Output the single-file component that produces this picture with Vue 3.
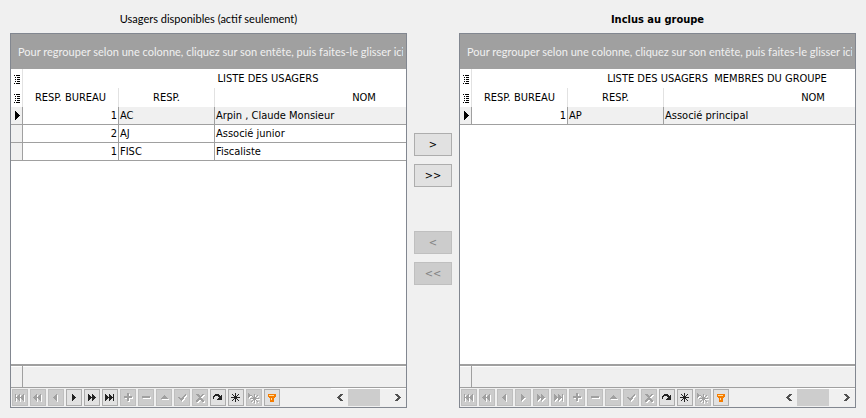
<script setup>
const transfers = [
  { label: '>', title: 'Ajouter', off: false },
  { label: '>>', title: 'Tout ajouter', off: false },
  { label: '<', title: 'Retirer', off: true },
  { label: '<<', title: 'Tout retirer', off: true },
]

const tools = [
  { name: 'Premier', d: 'M3 5h1v7H3zM8 5v7L4 8.5zM12 5v7L8 8.5z' },
  { name: 'Page précédente', d: 'M7 5v7L3 8.5zM11 5v7L7 8.5z' },
  { name: 'Précédent', d: 'M9 5v7L5 8.5z' },
  { name: 'Suivant', d: 'M6 5v7l4-3.5z' },
  { name: 'Page suivante', d: 'M4 5v7l4-3.5zM8 5v7l4-3.5z' },
  { name: 'Dernier', d: 'M3 5v7l4-3.5zM7 5v7l4-3.5zM11 5h1v7h-1z' },
  { name: 'Insérer', d: 'M7 4h2v3h3v2H9v3H7V9H4V7h3z' },
  { name: 'Supprimer', d: 'M4 7h8v2H4z' },
  { name: 'Modifier', d: 'M8 6l4 4H4z' },
  { name: 'Enregistrer', d: 'M4 8h2l1 2 4-5h1v1l-4 6H7z' },
  { name: 'Annuler', d: 'M4 5h2l2 2 2-2h2v1L9 8.500l3 3v1h-2l-2-2-2 2H4v-1l3-3-3-2.500z' },
  { name: 'Rafraîchir', d: 'M3 10V7h1V6h1V5h4v1h1v1h1V6h1v5H7v-1h1V9h1V8H8V7H5v1H4v2z' },
  { name: 'Signet', d: 'M7 4h1v3h1V6h1V5h1v1h-1v1H9v1h3v1H9v1h1v1h1v1h-1v-1H9v-1H8v3H7v-3H6v1H5v1H4v-1h1v-1h1V9H3V8h3V7H5V6H4V5h1v1h1v1h1z' },
  { name: 'Aller au signet', d: 'M2 4v5l3-2.500zM8 5h1v3h1V7h1V6h1v1h-1v1h-1v1h3v1h-3v1h1v1h1v1h-1v-1h-1v-1H9v3H8v-3H7v1H6v1H5v-1h1v-1h1v-1H4V9h3V8H6V7H5V6h1v1h1v1h1z' },
  { name: 'Filtrer', filter: true },
]

const panels = [
  {
    id: 'disponibles',
    title: 'Usagers disponibles (actif seulement)',
    bold: false,
    band: 'LISTE DES USAGERS',
    rows: [
      [1, 'AC', 'Arpin , Claude Monsieur'],
      [2, 'AJ', 'Associé junior'],
      [1, 'FISC', 'Fiscaliste'],
    ],
    enabled: [3, 4, 5, 11, 12, 14],
  },
  {
    id: 'inclus',
    title: 'Inclus au groupe',
    bold: true,
    band: 'LISTE DES USAGERS\u00a0 MEMBRES DU GROUPE',
    rows: [[1, 'AP', 'Associé principal']],
    enabled: [11, 12, 14],
  },
]
</script>

<template>
  <main class="page">
    <section v-for="p in panels" :key="p.id" class="side" :class="p.id" :aria-labelledby="p.id">
      <h2 :id="p.id" class="title" :class="{ bold: p.bold }">{{ p.title }}</h2>
      <div class="panel">
        <div class="groupbar">
          <span>Pour regrouper selon une colonne, cliquez sur son entête, puis faites-le glisser ici</span>
        </div>
        <div class="view">
          <table>
            <colgroup>
              <col class="c-mark"><col class="c-code"><col class="c-code"><col class="c-name">
            </colgroup>
            <thead>
              <tr>
                <th class="sep">
                  <svg class="list" width="6" height="9" viewBox="0 0 6 9"><path d="M0 0h1v1H0zM2 0h4v1H2zM1 2h1v1H1zM3 2h3v1H3zM1 4h1v1H1zM3 4h3v1H3zM1 6h1v1H1zM3 6h3v1H3zM0 8h1v1H0zM2 8h4v1H2z" /></svg>
                </th>
                <th colspan="3">{{ p.band }}</th>
              </tr>
              <tr>
                <th class="sep">
                  <svg class="list" width="6" height="9" viewBox="0 0 6 9"><path d="M0 0h1v1H0zM2 0h4v1H2zM1 2h1v1H1zM3 2h3v1H3zM1 4h1v1H1zM3 4h3v1H3zM1 6h1v1H1zM3 6h3v1H3zM0 8h1v1H0zM2 8h4v1H2z" /></svg>
                </th>
                <th class="sep">RESP. BUREAU</th>
                <th class="sep">RESP.</th>
                <th>NOM</th>
              </tr>
            </thead>
            <tbody>
              <tr v-for="(r, i) in p.rows" :key="i" :class="{ current: i === 0 }">
                <td class="mark">
                  <svg v-if="i === 0" width="5" height="9" viewBox="0 0 5 9"><path d="M0 0v9l5-4.500z" /></svg>
                </td>
                <td class="num">{{ r[0] }}</td>
                <td>{{ r[1] }}</td>
                <td>{{ r[2] }}</td>
              </tr>
            </tbody>
          </table>
        </div>
        <div class="summary"><span class="stub"></span></div>
        <div class="navigator">
          <div class="tools">
            <button
              v-for="(t, i) in tools" :key="t.name" type="button" class="tool"
              :disabled="!p.enabled.includes(i)" :aria-label="t.name"
            >
              <svg width="16" height="17" viewBox="0 0 16 17">
                <template v-if="t.filter">
                  <path d="M4 5h8v3h-1v1h-1v4H6V9H5V8H4z" fill="#f57c00" />
                  <path d="M5 6h5v1H5zM7 9h1v2H7z" fill="#ffe0a0" />
                </template>
                <path v-else :d="t.d" />
              </svg>
            </button>
          </div>
          <div class="scroll">
            <button type="button" class="arrow" aria-label="Défiler à gauche">
              <svg width="6" height="7" viewBox="0 0 6 7"><path d="M3 0h3v1H5v1H4v1H3v1h1v1h1v1h1v1H3V6H2V5H1V4H0V3h1V2h1V1h1z" /></svg>
            </button>
            <div class="track"><div class="thumb"></div></div>
            <button type="button" class="arrow" aria-label="Défiler à droite">
              <svg width="6" height="7" viewBox="0 0 6 7"><path d="M3 0H0v1h1v1h1v1h1v1H2v1H1v1H0v1h3V6h1V5h1V4h1V3H5V2H4V1H3z" /></svg>
            </button>
          </div>
        </div>
      </div>
    </section>

    <div class="transfer">
      <button v-for="b in transfers" :key="b.label" type="button" :disabled="b.off" :aria-label="b.title">{{ b.label }}</button>
    </div>
  </main>
</template>

<style>
body {
  margin: 0;
  background: #f0f0f0;
}
</style>

<style scoped>
.page {
  box-sizing: border-box;
  min-height: 100vh;
  padding: 10px;
  display: grid;
  grid-template-columns: minmax(0, 1fr) 52px minmax(0, 1fr);
  font: 11px/18px Tahoma, Lato, sans-serif;
  color: #000;
}
.side {
  grid-row: 1;
  display: flex;
  flex-direction: column;
}
.disponibles { grid-column: 1; }
.inclus { grid-column: 3; }
.title {
  margin: 0;
  padding: 0 0 5px;
  font-size: 11px;
  font-weight: 400;
  text-align: center;
}
.title.bold {
  padding: 1px 0 4px;
  font-family: Tahoma, "DejaVu Sans Condensed", sans-serif;
  font-weight: 700;
}
.panel {
  flex: 1;
  display: flex;
  flex-direction: column;
  border: 1px solid #828790;
  background: #fff;
}
.groupbar {
  padding: 9px 3px 8px 7px;
  background: #a0a0a0;
  color: #f0f0f0;
}
.groupbar span {
  display: block;
  overflow: hidden;
  white-space: nowrap;
}
.view {
  flex: 1;
  overflow: hidden;
}
table {
  width: 502px;
  table-layout: fixed;
  border-collapse: separate;
  border-spacing: 0;
  font-family: Tahoma, "DejaVu Sans Condensed", sans-serif;
}
.c-mark { width: 12px; }
.c-code { width: 96px; }
th {
  box-sizing: border-box;
  height: 19px;
  padding: 1px 0 0;
  font-weight: 400;
  white-space: nowrap;
}
th.sep { border-right: 1px solid #e2e2e2; }
svg {
  display: block;
  fill: currentColor;
  shape-rendering: crispEdges;
}
.list { margin-left: 3px; }
td {
  box-sizing: border-box;
  height: 18px;
  padding: 1px 1px 0;
  line-height: 16px;
  border-right: 1px solid #a0a0a0;
  border-bottom: 1px solid #a0a0a0;
  white-space: nowrap;
}
.current td { background: #f0f0f0; }
.current td.num { background: #fff; }
td.num { text-align: right; }
td.mark {
  padding: 0 0 0 4px;
  background: #f0f0f0;
}
.summary {
  display: flex;
  height: 21px;
  border-top: 2px solid #a0a0a0;
  border-bottom: 1px solid #a0a0a0;
  background: #f0f0f0;
  box-shadow: inset 0 1px #fff;
}
.stub {
  width: 11px;
  border-right: 1px solid #a0a0a0;
}
.navigator {
  display: flex;
  justify-content: space-between;
  background: #f0f0f0;
}
.tools {
  display: flex;
  gap: 2px;
  padding: 1px;
}
button {
  box-sizing: border-box;
  margin: 0;
  padding: 0;
  font: inherit;
  color: #000;
  background: #e1e1e1;
  border: 1px solid #adadad;
}
.tool {
  width: 16px;
  height: 17px;
  color: #222;
}
.tool svg { margin: -1px; }
button:disabled {
  color: #838383;
  background: #ccc;
  border-color: #bfbfbf;
}
.tool:disabled { color: #a0a0a0; }
.tool:disabled svg { filter: drop-shadow(1px 1px 0 #fff); }
.scroll {
  display: flex;
  width: 75px;
  padding-bottom: 1px;
  border-top: 1px solid #fff;
}
.arrow {
  width: 17px;
  border: 0;
  background: none;
  color: #505050;
}
.arrow svg { margin: 0 auto; }
.track {
  flex: 1;
  display: flex;
}
.thumb {
  width: 32px;
  background: #cdcdcd;
}
.transfer {
  grid-column: 2;
  grid-row: 1;
  display: flex;
  flex-direction: column;
  gap: 8px;
  padding: 123px 7px 0;
}
.transfer button {
  height: 23px;
  font-family: Tahoma, "DejaVu Sans Condensed", sans-serif;
}
.transfer button:nth-child(3) { margin-top: 36px; }
</style>
